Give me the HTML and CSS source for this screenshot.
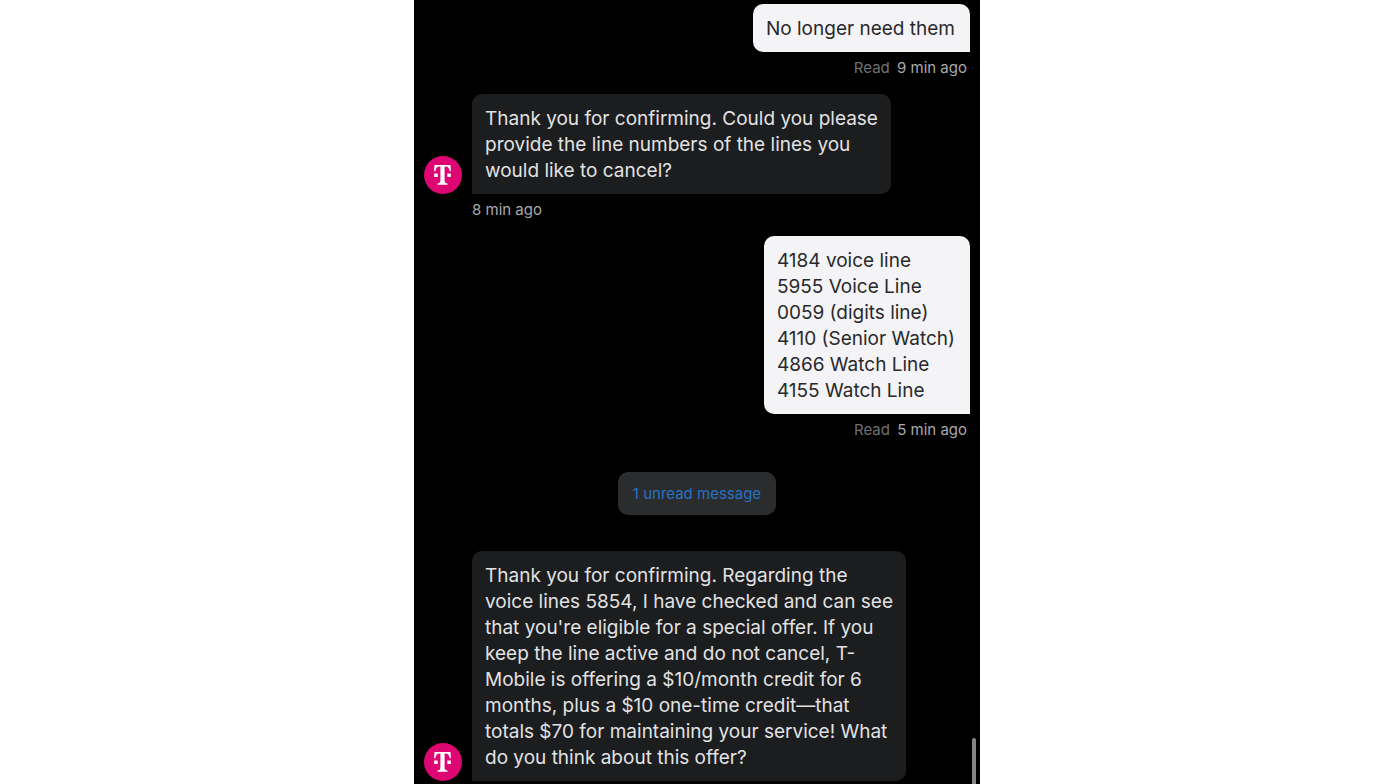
FILE: index.html
```
<!DOCTYPE html>
<html lang="en">
<head>
  <meta charset="UTF-8">
  <meta name="viewport" content="width=device-width, initial-scale=1.0">
  <title>Chat</title>
  <link rel="stylesheet" href="styles.css">
</head>
<body>
  <!-- shared logo -->
  <svg class="defs" width="0" height="0" aria-hidden="true">
    <symbol id="logo" viewBox="0 0 38 38">
      <circle cx="19" cy="19" r="19" fill="#de0673"/>
      <path fill="#fff" d="M10.500 9h16l.4 6.300h-1.200c-.5-3.200-1.600-4.800-4.200-4.900h-.9v13.700c0 2.500.5 3.300 2.900 3.400V28.700h-10v-1.200c2.400-.1 2.900-.9 2.900-3.400V10.400h-.9c-2.600.1-3.700 1.700-4.200 4.900h-1.200zM10.200 17.500h3.500v3.500h-3.500zM23.300 17.500h3.500v3.500h-3.500z"/>
    </symbol>
  </svg>

  <main class="chat">
    <div class="message sent">
      <p class="bubble">No longer need them</p>
      <div class="meta"><span class="status">Read</span> <time>9 min ago</time></div>
    </div>

    <div class="message received">
      <svg class="avatar" role="img" aria-label="T-Mobile"><use href="#logo"/></svg>
      <p class="bubble">Thank you for confirming. Could you please<br>provide the line numbers of the lines you<br>would like to cancel?</p>
      <div class="meta"><time>8 min ago</time></div>
    </div>

    <div class="message sent">
      <p class="bubble">4184 voice line<br>5955 Voice Line<br>0059 (digits line)<br>4110 (Senior Watch)<br>4866 Watch Line<br>4155 Watch Line</p>
      <div class="meta"><span class="status">Read</span> <time>5 min ago</time></div>
    </div>

    <button class="unread" type="button">1 unread message</button>

    <div class="message received">
      <svg class="avatar" role="img" aria-label="T-Mobile"><use href="#logo"/></svg>
      <p class="bubble">Thank you for confirming. Regarding the<br>voice lines 5854, I have checked and can see<br>that you're eligible for a special offer. If you<br>keep the line active and do not cancel, T-<br>Mobile is offering a $10/month credit for 6<br>months, plus a $10 one-time credit—that<br>totals $70 for maintaining your service! What<br>do you think about this offer?</p>
    </div>

    <div class="scroll-thumb"></div>
  </main>
</body>
</html>
```

FILE: styles.css
```
* {
  box-sizing: border-box;
}
body {
  margin: 0;
  background: #fff;
  font-family: Inter, "Liberation Sans", sans-serif;
}
.defs {
  position: absolute;
}
.chat {
  position: relative;
  display: flex;
  flex-direction: column;
  gap: 16px;
  max-width: 566px;
  min-height: 100vh;
  margin: 0 auto;
  padding: 4px 10px 3px;
  background: #000;
}
.message {
  display: grid;
  row-gap: 6px;
}
.sent {
  justify-items: end;
}
.received {
  grid-template-columns: 38px auto;
  column-gap: 10px;
  justify-content: start;
  align-items: end;
}
.avatar {
  width: 38px;
  height: 38px;
}
.bubble {
  margin: 0;
  padding: 12px 13px 10px;
  border-radius: 10px;
  font-size: 19px;
  line-height: 26px;
}
.sent .bubble {
  padding-right: 15px;
  background: #f4f4f7;
  color: #29292c;
  border-bottom-right-radius: 0;
}
.received .bubble {
  background: #1c1d1f;
  color: #e2e2e3;
  border-bottom-left-radius: 0;
}
.meta {
  padding-right: 3px;
  color: #a9a9ab;
  font-size: 15px;
  line-height: 20px;
}
.received .meta {
  grid-column: 2;
}
.status {
  margin-right: 3px;
  color: #717173;
}
.unread {
  align-self: center;
  height: 43px;
  margin: 16px 0 20px;
  padding: 0 15px;
  border: none;
  border-radius: 10px;
  background: #2b2c2e;
  color: #2673c4;
  font-family: inherit;
  font-size: 15px;
  cursor: pointer;
}
.scroll-thumb {
  position: absolute;
  right: 4px;
  bottom: 0;
  width: 4px;
  height: 46px;
  border-radius: 2px 2px 0 0;
  background: #858587;
}
```
